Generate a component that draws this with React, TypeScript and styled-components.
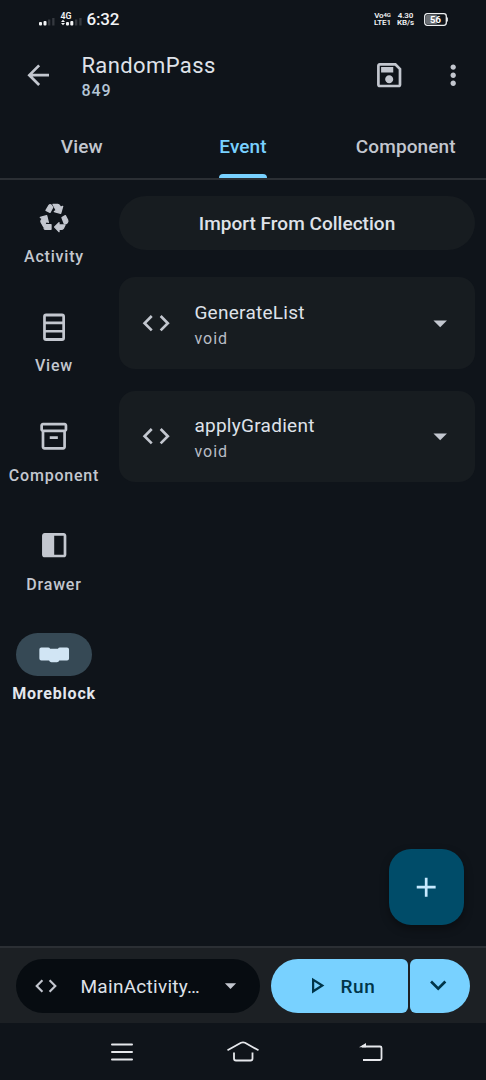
import React from "react";
import styled, { createGlobalStyle } from "styled-components";

const GlobalStyle = createGlobalStyle`
  * { box-sizing: border-box; }
  body { margin: 0; background: #0f141a; font-family: Roboto, "Liberation Sans", sans-serif; }
  button { font: inherit; color: inherit; border: 0; padding: 0; margin: 0; background: none; }
  svg { display: block; flex: none; }
`;

const Screen = styled.div`
  width: 486px;
  height: 1080px;
  display: flex;
  flex-direction: column;
  background: #0f141a;
  color: #c3c7cf;
  overflow: hidden;
`;

const StatusBar = styled.div`
  height: 38px;
  flex: none;
  display: flex;
  align-items: center;
  padding: 0 38px 0 39px;
  color: #f2f3f5;
`;

const Clock = styled.div`
  font-size: 17px;
  font-weight: 500;
  line-height: 20px;
  letter-spacing: -0.2px;
  margin-left: 4.5px;
`;

const StatusRight = styled.div`
  margin-left: auto;
  display: flex;
  align-items: center;
`;

const TinyLabel = styled.div<{ $width: number; $gap: number }>`
  width: ${(p) => p.$width}px;
  margin-right: ${(p) => p.$gap}px;
  display: flex;
  flex-direction: column;
  align-items: center;
  font-size: 8px;
  line-height: 7px;
  font-weight: 600;
  letter-spacing: -0.1px;
  white-space: nowrap;
`;

const TinySup = styled.span`
  font-size: 6px;
  position: relative;
  top: -1px;
`;

const AppBar = styled.header`
  height: 77px;
  flex: none;
  display: flex;
  align-items: center;
  padding: 0 16.5px 2px 22px;
`;

const Titles = styled.div`
  flex: 1;
  margin-left: 27px;
  padding-top: 5px;
`;

const Title = styled.div`
  font-size: 22px;
  line-height: 26px;
  letter-spacing: 0.4px;
  color: #dfe2e9;
`;

const Subtitle = styled.div`
  font-size: 16px;
  line-height: 24px;
  font-weight: 500;
  letter-spacing: 0.9px;
  color: #b4c5d5;
`;

const Tabs = styled.nav`
  height: 65px;
  flex: none;
  display: flex;
  border-bottom: 2px solid #2b2f34;
`;

const Tab = styled.button<{ $active?: boolean }>`
  width: 162px;
  display: flex;
  flex-direction: column;
  align-items: center;
  justify-content: space-between;
  padding-top: 20px;
  padding-left: ${(p) => (p.$active ? 0 : 1.5)}px;
  font-size: 19px;
  line-height: 24px;
  font-weight: 500;
  letter-spacing: 0.1px;
  color: ${(p) => (p.$active ? "#78d1ff" : "#c3c7cf")};
`;

const Indicator = styled.span`
  width: 48px;
  height: 4px;
  border-radius: 4px 4px 0 0;
  background: #78d1ff;
`;

const Main = styled.main`
  flex: 1;
  min-height: 0;
  display: flex;
  position: relative;
`;

const Rail = styled.nav`
  width: 108px;
  display: flex;
  flex-direction: column;
  padding-top: 16px;
`;

const RailItem = styled.button<{ $active?: boolean }>`
  height: 109.25px;
  display: flex;
  flex-direction: column;
  align-items: center;
  gap: 7px;
  font-size: 16px;
  line-height: 22px;
  font-weight: ${(p) => (p.$active ? 700 : 500)};
  letter-spacing: 0.8px;
  color: ${(p) => (p.$active ? "#e3e6ed" : "#c3c7cf")};
`;

const RailIcon = styled.span<{ $active?: boolean }>`
  width: 76px;
  height: 43px;
  border-radius: 22px;
  display: flex;
  align-items: center;
  justify-content: center;
  background: ${(p) => (p.$active ? "#364955" : "transparent")};
  color: ${(p) => (p.$active ? "#d1e5f4" : "#c3c7cf")};
`;

const Content = styled.section`
  flex: 1;
  padding: 16px 11px 0;
  display: flex;
  flex-direction: column;
`;

const ImportButton = styled.button`
  height: 54px;
  margin-bottom: 27px;
  border-radius: 27px;
  background: #171c20;
  color: #dfe2e9;
  font-size: 19px;
  font-weight: 500;
  letter-spacing: 0.03px;
`;

const Card = styled.div`
  height: 91.5px;
  margin-bottom: 22px;
  border-radius: 16px;
  background: #171c20;
  display: flex;
  align-items: center;
  padding: 0 19px 0 21px;
`;

const CardText = styled.div`
  flex: 1;
  margin-left: 22px;
  padding-top: 4px;
`;

const CardName = styled.div`
  font-size: 19px;
  line-height: 27px;
  letter-spacing: 0.27px;
  color: #dfe2e9;
`;

const CardType = styled.div`
  font-size: 16px;
  line-height: 25px;
  letter-spacing: 1px;
  color: #b9bdc5;
`;

const Fab = styled.button`
  position: absolute;
  right: 22px;
  bottom: 21px;
  width: 75px;
  height: 76px;
  border-radius: 22px;
  background: #004c69;
  color: #c6e9ff;
  display: flex;
  align-items: center;
  justify-content: center;
  box-shadow: 0 4px 8px rgba(0, 0, 0, 0.35);
`;

const BottomBar = styled.footer`
  height: 77px;
  flex: none;
  display: flex;
  align-items: flex-start;
  padding: 10.5px 16px 0;
  background: #1c2024;
  border-top: 2px solid #2b2f34;
`;

const FileSelect = styled.button`
  width: 244px;
  height: 54px;
  border-radius: 27px;
  background: #070c11;
  display: flex;
  align-items: center;
  padding: 0 16px 0 16.5px;
  margin-right: 10.5px;
  color: #c3c7cf;
`;

const FileName = styled.span`
  flex: 1;
  margin-left: 22px;
  padding-top: 1px;
  text-align: left;
  font-size: 19px;
  letter-spacing: 0.28px;
  color: #dfe2e9;
`;

const RunButton = styled.button`
  width: 137px;
  height: 54px;
  border-radius: 27px 6px 6px 27px;
  background: #78d1ff;
  color: #003549;
  display: flex;
  align-items: center;
  padding-left: 32.5px;
  gap: 10.5px;
  margin-right: 2.5px;
  font-size: 19px;
  font-weight: 500;
  letter-spacing: 0.6px;
`;

const RunLabel = styled.span`
  padding-top: 1px;
`;

const MoreButton = styled.button`
  width: 60px;
  height: 54px;
  border-radius: 6px 27px 27px 6px;
  background: #78d1ff;
  color: #003549;
  display: flex;
  align-items: center;
  justify-content: center;
  padding-right: 4px;
`;

const MoreSpacer = styled.div`
  margin-left: 32px;
`;

const SystemNav = styled.div`
  height: 57px;
  flex: none;
  display: flex;
  align-items: center;
  padding-left: 109px;
  color: #e6e8ec;
`;

const NavButton = styled.button<{ $gap: number }>`
  margin-left: ${(p) => p.$gap}px;
`;

type IconProps = { d: string; size?: number; rule?: "evenodd" };

const Icon = ({ d, size = 32.4, rule }: IconProps) => (
  <svg width={size} height={size} viewBox="0 0 24 24" fill="currentColor" fillRule={rule}>
    <path d={d} />
  </svg>
);

const paths = {
  back: "M20 11H7.83l5.59-5.59L12 4l-8 8 8 8 1.41-1.41L7.83 13H20v-2z",
  code: "M9.4 16.6L4.8 12l4.6-4.6L8 6l-6 6 6 6 1.4-1.4zm5.2 0l4.6-4.6-4.6-4.6L16 6l6 6-6 6-1.4-1.4z",
  caret: "M7 10l5 5 5-5z",
  more: "M12 8c1.1 0 2-.9 2-2s-.9-2-2-2-2 .9-2 2 .9 2 2 2zm0 2c-1.1 0-2 .9-2 2s.9 2 2 2 2-.9 2-2-.9-2-2-2zm0 6c-1.1 0-2 .9-2 2s.9 2 2 2 2-.9 2-2-.9-2-2-2z",
  save: "M17 3H5c-1.1 0-2 .9-2 2v14c0 1.1.9 2 2 2h14c1.1 0 2-.9 2-2V7l-4-4zm2 16H5V5h11.17L19 7.83V19zM12 12c-1.66 0-3 1.34-3 3s1.34 3 3 3 3-1.34 3-3-1.34-3-3-3zM6 6h9v4H6z",
  view: "M17.8 1.8H6a2.2 2.2 0 0 0-2.2 2.2v16a2.2 2.2 0 0 0 2.2 2.2h11.8a2.2 2.2 0 0 0 2.2-2.2V4a2.2 2.2 0 0 0-2.2-2.2zM18 4v3.8H5.8V4zM18 9.8v4.2H5.8V9.8zM18 16v4H5.8v-4z",
  component: "M19.7 2H3.7c-1 0-2 .9-2 2v3.01c0 .72.43 1.34 1 1.69V20c0 1.1 1.1 2 2 2h14c.9 0 2-.9 2-2V8.7c.57-.35 1-.97 1-1.69V4c0-1.1-1-2-2-2zM18.7 20H4.7V9h14v11zM19.7 7H3.7V4h16v3zM8.7 12h6v2h-6z",
  drawer: "M19 3H5c-1.1 0-2 .9-2 2v14c0 1.1.9 2 2 2h14c1.1 0 2-.9 2-2V5c0-1.1-.9-2-2-2zM19 19h-7V5h7z",
  block: "M2.5 7H7.5Q8.6 7 9 7.9H14.8Q15.2 7 16.3 7H21.5Q23 7 23 8.5V15.2Q23 16.7 21.5 16.7H15.8Q15.4 18 14 18H10Q8.6 18 8.2 16.7H2.5Q1 16.7 1 15.2V8.5Q1 7 2.5 7Z",
  play: "M8 5v14l11-7zM10 8.64L15.27 12 10 15.36z",
  plus: "M19 13h-6v6h-2v-6H5v-2h6V5h2v6h6v2z",
  down: "M7.41 8.59L12 13.17l4.59-4.58L18 10l-6 6-6-6 1.41-1.41z",
};

const RecycleIcon = () => (
  <svg width="40" height="40" viewBox="0 0 120 120" fill="currentColor" stroke="currentColor" strokeWidth="4" strokeLinejoin="round">
    <path d="M36 37L45 22Q48 18 52 22L56 28L48 43Z" />
    <path d="M57 19H71Q75 19 77 23L80 28L86 25L80 46L61 41L67 37Z" />
    <path d="M84 59L94 53L101 66Q103 71 99 75Q96 78 91 77Z" />
    <path d="M62 87L75 74V81H93L88 91Q86 94 82 94H75V101Z" />
    <path d="M34 80H51V94H34Q29 94 31 87Z" />
    <path d="M19 58L38 53L43 73L37 70L29 86L21 72Q20 69 22 67L25 62Z" />
  </svg>
);

const Signals = () => (
  <svg width="43" height="18" viewBox="39 10 43 18" fill="#f2f3f5">
    <rect x="39" y="22" width="3" height="3.5" rx="1" />
    <rect x="43.5" y="21" width="3" height="4.5" rx="1" />
    <rect x="48" y="19.5" width="2.3" height="6" fill="#35393f" />
    <rect x="52.2" y="18" width="2.3" height="7.5" fill="#35393f" />
    <text x="60.5" y="18.8" fontSize="9" fontWeight="600" textLength="11" lengthAdjust="spacingAndGlyphs">4G</text>
    <path d="M61 22l2-2.2 2 2.2zM61 23l2 2.2 2-2.2z" />
    <rect x="66" y="22" width="3" height="3.5" rx="1" />
    <rect x="70.3" y="21" width="3" height="4.5" rx="1" />
    <rect x="75" y="19.5" width="2.3" height="6" fill="#35393f" />
    <rect x="79.3" y="18" width="2.3" height="7.5" fill="#35393f" />
  </svg>
);

const Battery = () => (
  <svg width="24" height="13" viewBox="0 0 24 13">
    <rect x="0.7" y="0.7" width="21.6" height="11.6" rx="2.5" fill="none" stroke="#eceef0" strokeWidth="1.3" />
    <rect x="2" y="2" width="11" height="9" rx="1" fill="#6b6f74" />
    <path d="M23.2 4.5v4" stroke="#eceef0" strokeWidth="1.3" />
    <text x="11.5" y="9.9" fontSize="9.5" fontWeight="700" textAnchor="middle" fill="#fff">56</text>
  </svg>
);

const railItems = [
  { label: "Activity", icon: <RecycleIcon /> },
  { label: "View", icon: <Icon d={paths.view} rule="evenodd" /> },
  { label: "Component", icon: <Icon d={paths.component} rule="evenodd" /> },
  { label: "Drawer", icon: <Icon d={paths.drawer} rule="evenodd" /> },
  { label: "Moreblock", icon: <Icon d={paths.block} />, active: true },
];

export default function App() {
  return (
    <Screen>
      <GlobalStyle />
      <StatusBar>
        <Signals />
        <Clock>6:32</Clock>
        <StatusRight>
          <TinyLabel $width={17} $gap={6}>
            <span>Vo<TinySup>4G</TinySup></span>
            <span>LTE1</span>
          </TinyLabel>
          <TinyLabel $width={17} $gap={10}>
            <span>4.30</span>
            <span>KB/s</span>
          </TinyLabel>
          <Battery />
        </StatusRight>
      </StatusBar>
      <AppBar>
        <Icon d={paths.back} />
        <Titles>
          <Title>RandomPass</Title>
          <Subtitle>849</Subtitle>
        </Titles>
        <Icon d={paths.save} rule="evenodd" />
        <MoreSpacer><Icon d={paths.more} /></MoreSpacer>
      </AppBar>
      <Tabs>
        <Tab>View</Tab>
        <Tab $active>Event<Indicator /></Tab>
        <Tab>Component</Tab>
      </Tabs>
      <Main>
        <Rail>
          {railItems.map((item) => (
            <RailItem key={item.label} $active={item.active}>
              <RailIcon $active={item.active}>{item.icon}</RailIcon>
              {item.label}
            </RailItem>
          ))}
        </Rail>
        <Content>
          <ImportButton>Import From Collection</ImportButton>
          {["GenerateList", "applyGradient"].map((name) => (
            <Card key={name}>
              <Icon d={paths.code} />
              <CardText>
                <CardName>{name}</CardName>
                <CardType>void</CardType>
              </CardText>
              <Icon d={paths.caret} />
            </Card>
          ))}
        </Content>
        <Fab><Icon d={paths.plus} /></Fab>
      </Main>
      <BottomBar>
        <FileSelect>
          <Icon d={paths.code} size={26} />
          <FileName>MainActivity…</FileName>
          <Icon d={paths.caret} size={27} />
        </FileSelect>
        <RunButton>
          <Icon d={paths.play} size={27} rule="evenodd" />
          <RunLabel>Run</RunLabel>
        </RunButton>
        <MoreButton><Icon d={paths.down} /></MoreButton>
      </BottomBar>
      <SystemNav>
        <NavButton $gap={0}>
          <svg width="26" height="20" viewBox="0 0 26 20" stroke="currentColor" strokeWidth="2" fill="none" strokeLinecap="round">
            <path d="M3 2.5h20M3 10h20M3 17.5h20" />
          </svg>
        </NavButton>
        <NavButton $gap={91}>
          <svg width="34" height="22" viewBox="0 0 34 22" stroke="currentColor" strokeWidth="1.8" fill="none" strokeLinejoin="round">
            <path d="M1.5 9.3L15 1.8q2-1 4 0L32.5 9.3M8 11.5v6q0 2 2 2h14.5q2 0 2-2v-6" />
          </svg>
        </NavButton>
        <NavButton $gap={97.5}>
          <svg width="26" height="20" viewBox="0 0 26 20" stroke="currentColor" strokeWidth="1.8" fill="none">
            <path d="M4 4.5h18q1.5 0 1.5 1.5v10.5q0 1.5-1.5 1.5H5" />
            <path d="M1 5.2L8 1v4.2z" fill="currentColor" stroke="none" />
          </svg>
        </NavButton>
      </SystemNav>
    </Screen>
  );
}
